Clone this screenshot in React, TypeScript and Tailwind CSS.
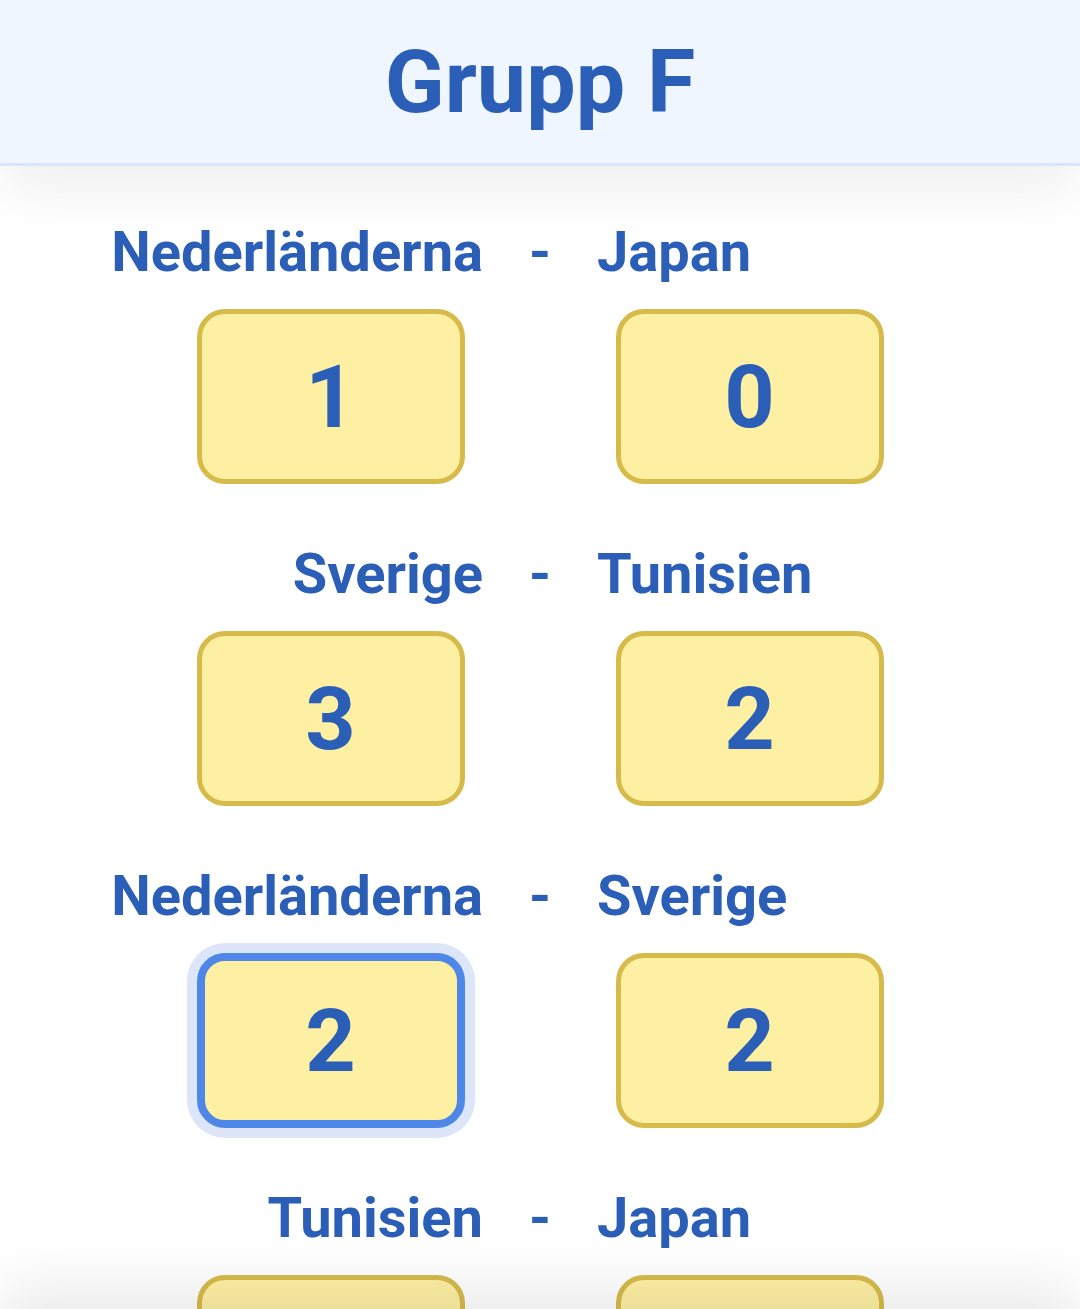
import React from "react";

type Match = { home: string; away: string; hs: string; as: string; focus?: "home" | "away" };

const matches: Match[] = [
  { home: "Nederländerna", away: "Japan", hs: "1", as: "0" },
  { home: "Sverige", away: "Tunisien", hs: "3", as: "2" },
  { home: "Nederländerna", away: "Sverige", hs: "2", as: "2", focus: "home" },
  { home: "Tunisien", away: "Japan", hs: "", as: "" },
];

function ScoreBox({ value, focused }: { value: string; focused?: boolean }) {
  return (
    <div
      className={
        focused
          ? "w-[268px] h-[175px] shrink-0 rounded-[28px] border-[8px] border-[#4f87e8] bg-[#fef0a3] ring-[10px] ring-[#dce6f8] flex items-center justify-center text-[88px] font-bold text-[#2b5eb7]"
          : "w-[268px] h-[175px] shrink-0 rounded-[28px] border-[5px] border-[#d6bb4b] bg-[#fef0a3] flex items-center justify-center text-[88px] font-bold text-[#2b5eb7]"
      }
    >
      {value}
    </div>
  );
}

export default function App() {
  return (
    <div
      className="min-h-[1309px] bg-white text-[#2b5eb7]"
      style={{ fontFamily: "Roboto, 'Liberation Sans', sans-serif" }}
    >
      <header className="relative z-10 h-[166px] bg-[#eff6ff] border-b-[3px] border-[#d8e6fb] shadow-[0_20px_60px_rgba(0,0,0,0.07)] flex items-center justify-center">
        <h1 className="text-[88px] font-bold leading-none text-[#2b5eb7]">Grupp F</h1>
      </header>
      <main className="pt-[54px] flex flex-col gap-[58px]">
        {matches.map((m, i) => (
          <div key={i} className="flex flex-col gap-[25px]">
            <div className="grid grid-cols-[1fr_114px_1fr] h-[64px] text-[56px] font-bold leading-[64px]">
              <div className="text-right">{m.home}</div>
              <div className="text-center">-</div>
              <div className="text-left">{m.away}</div>
            </div>
            <div className="flex justify-center gap-[151px]">
              <ScoreBox value={m.hs} focused={m.focus === "home"} />
              <ScoreBox value={m.as} focused={m.focus === "away"} />
            </div>
          </div>
        ))}
      </main>
      <div className="fixed left-0 right-0 bottom-[-100px] h-[100px] z-20 bg-white shadow-[0_-20px_60px_rgba(0,0,0,0.09)]" />
    </div>
  );
}
